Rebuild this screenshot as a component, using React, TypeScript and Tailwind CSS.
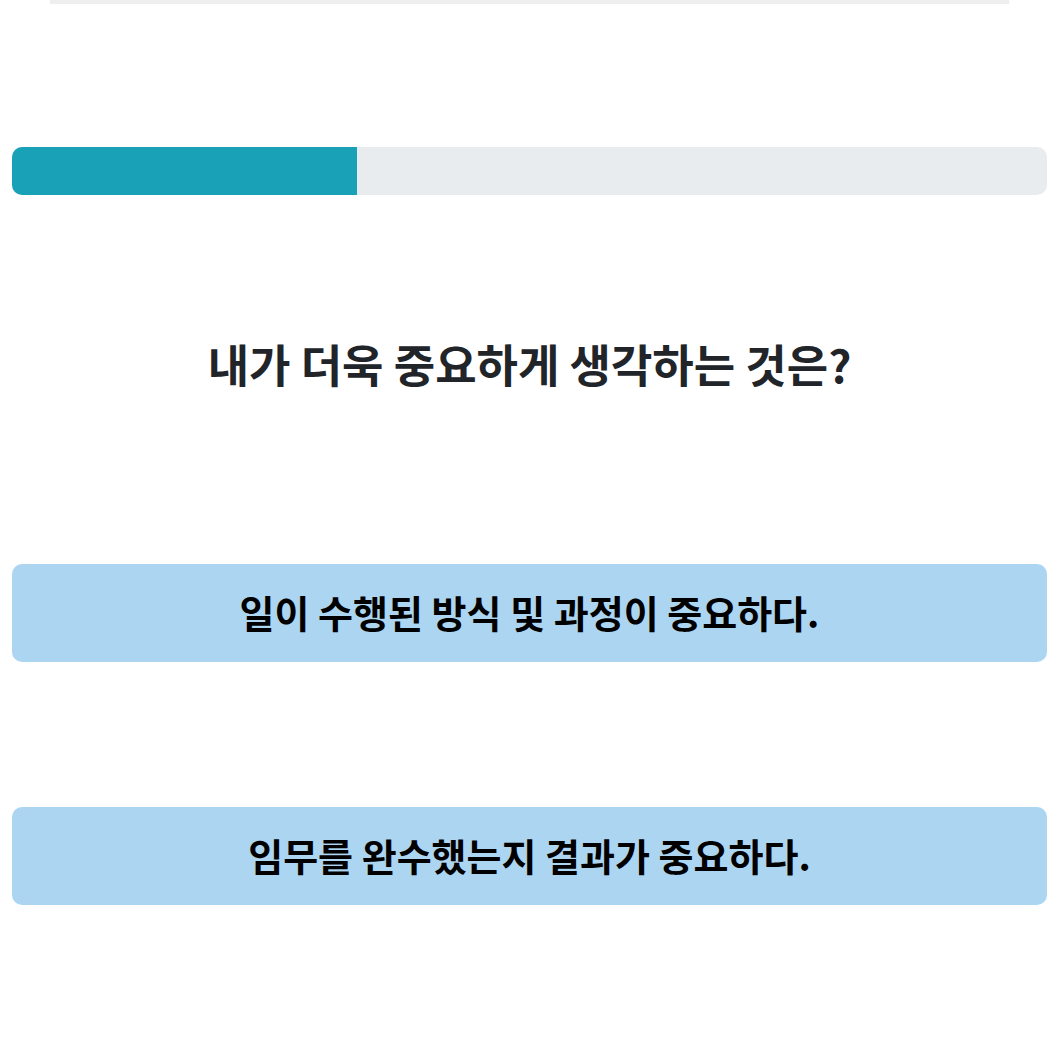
export default function App() {
  const progress = 1 / 3;
  const answers = [
    "일이 수행된 방식 및 과정이 중요하다.",
    "임무를 완수했는지 결과가 중요하다.",
  ];

  return (
    <div
      className="min-h-screen bg-white px-3"
      style={{ fontFamily: '"Noto Sans CJK KR", "Noto Sans", sans-serif' }}
    >
      {/* bottom edge of the previous card */}
      <div className="mx-[38px] h-[4px] bg-[#eeeeee]" />

      {/* Progress */}
      <div className="mt-[143px] flex h-[48px] w-full overflow-hidden rounded-[10px] bg-[#e9ecef]">
        <div
          className="h-full bg-[#19a2b7]"
          style={{ width: `${progress * 100}%` }}
        />
      </div>

      {/* Question */}
      <h1 className="mt-[142px] text-center text-[45px] font-bold leading-[54px] text-[#212529]">
        내가 더욱 중요하게 생각하는 것은?
      </h1>

      {/* Answers */}
      <div className="mt-[173px] flex flex-col gap-[145px]">
        {answers.map((a) => (
          <button
            key={a}
            className="flex h-[98px] w-full items-center justify-center rounded-[10px] bg-[#acd5f2] pb-[2px] text-[38px] font-bold leading-[46px] text-black"
          >
            {a}
          </button>
        ))}
      </div>
    </div>
  );
}
